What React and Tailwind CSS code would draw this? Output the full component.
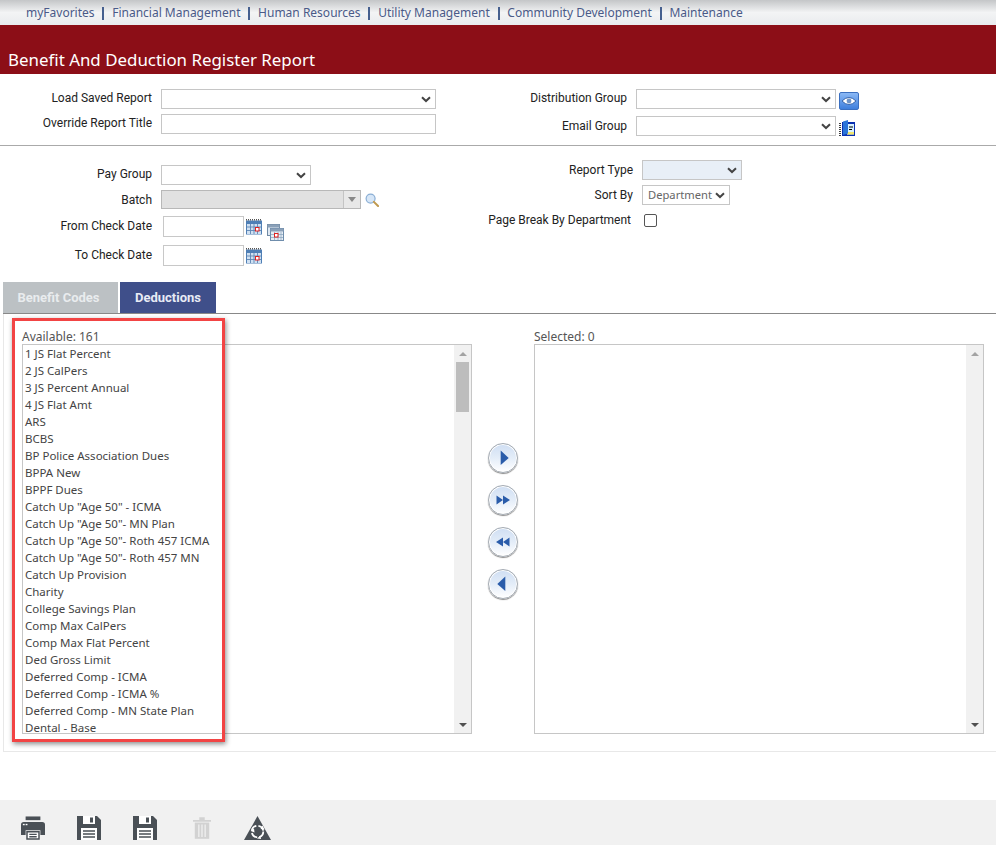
import React from "react";

const navItems = ["myFavorites", "Financial Management", "Human Resources", "Utility Management", "Community Development", "Maintenance"];

const available = [
  "1 JS Flat Percent", "2 JS CalPers", "3 JS Percent Annual", "4 JS Flat Amt", "ARS", "BCBS",
  "BP Police Association Dues", "BPPA New", "BPPF Dues", 'Catch Up "Age 50" - ICMA', 'Catch Up "Age 50"- MN Plan',
  'Catch Up "Age 50"- Roth 457 ICMA', 'Catch Up "Age 50"- Roth 457 MN', "Catch Up Provision", "Charity",
  "College Savings Plan", "Comp Max CalPers", "Comp Max Flat Percent", "Ded Gross Limit", "Deferred Comp - ICMA",
  "Deferred Comp - ICMA %", "Deferred Comp - MN State Plan", "Dental - Base",
];

const Chevron = () => (
  <svg width="10" height="7" viewBox="0 0 10 7" className="shrink-0">
    <path d="M1 1.2 L5 5 L9 1.2" fill="none" stroke="#444" strokeWidth="2" />
  </svg>
);

const Select = ({ className = "", children }) => (
  <div className={`flex items-center justify-between border border-[#c6c6c6] pl-[5px] pr-[4px] ${className}`}>
    <span className="text-[11.2px] text-[#666] font-['Noto_Sans',sans-serif]">{children}</span>
    <Chevron />
  </div>
);

const Label = ({ className = "", children }) => (
  <div className={`text-right text-[12px] leading-[14px] text-[#222] ${className}`}>{children}</div>
);

const Calendar = ({ className = "" }) => (
  <svg width="16" height="16" viewBox="0 0 16 16" className={className}>
    <rect x="0" y="1.5" width="16" height="14" fill="#4f7fb5" />
    <path d="M0 0.8H16" stroke="#555" strokeWidth="1.5" strokeDasharray="1 1" />
    <rect x="1" y="5" width="14" height="10" fill="#cfe0f2" />
    <path d="M1 8H15M1 11.5H15M4.5 5V15M8 5V15M11.5 5V15" stroke="#5d86b3" strokeWidth="0.9" />
    <rect x="9.5" y="8.5" width="3.5" height="3.5" fill="#fff" stroke="#e02020" />
  </svg>
);

const CalendarRange = () => (
  <svg width="17" height="17" viewBox="0 0 17 17">
    <rect x="0.5" y="0.5" width="12" height="11" fill="#dfe8f2" stroke="#708aa5" />
    <rect x="0.5" y="0.5" width="12" height="3" fill="#8aa0b8" />
    <rect x="3.5" y="4.5" width="13" height="12" fill="#e6edf5" stroke="#6f8dac" />
    <rect x="3.5" y="4.5" width="13" height="3" fill="#8aa0b8" />
    <path d="M4 10.5H16M4 13.5H16M7.5 8V16M11 8V16M14 8V16" stroke="#8fa8c0" strokeWidth="0.8" />
    <rect x="7.5" y="9.5" width="3.5" height="3.5" fill="#fff" stroke="#e02020" />
  </svg>
);

const MoveButton = ({ d }) => (
  <button className="flex h-[30px] w-[30px] items-center justify-center rounded-full border border-[#a4abb3] bg-gradient-to-b from-[#cfdef3] via-[#e4edf8] to-[#ffffff] shadow-[0_1px_1px_#8a8a8a,inset_0_0_0_1px_#ffffff]">
    <svg width="16" height="16" viewBox="0 0 16 16">
      <path d={d} fill="#2a5caa" />
    </svg>
  </button>
);

const Scrollbar = () => (
  <div className="flex w-[17px] shrink-0 flex-col justify-between bg-[#f1f1f1]">
    <div className="flex h-[17px] items-center justify-center">
      <div className="h-0 w-0 border-x-[4px] border-b-[4px] border-x-transparent border-b-[#a3a3a3]" />
    </div>
    <div className="flex h-[17px] items-center justify-center">
      <div className="h-0 w-0 border-x-[4px] border-t-[4px] border-x-transparent border-t-[#505050]" />
    </div>
  </div>
);

export default function App() {
  return (
    <div className="relative h-[845px] w-[996px] overflow-hidden bg-white font-['Roboto',sans-serif]">
      {/* top nav */}
      <div className="flex h-[25px] items-center bg-gradient-to-b from-[#c4c6c8] via-[#f3f4f5] to-[#e9ebee] pl-[26px] pt-[1px] font-['Noto_Sans',sans-serif] text-[12px] text-[#4a5a88]">
        {navItems.map((item, i) => (
          <React.Fragment key={item}>
            {i > 0 && <span className="mx-[7.8px] h-[13px] w-[2px] bg-[#46608f]" />}
            <span>{item}</span>
          </React.Fragment>
        ))}
      </div>

      {/* title */}
      <div className="flex h-[49px] items-end bg-[#8c0e17] pb-[2px] pl-[8px] font-['Noto_Sans',sans-serif] text-[16.9px] leading-[24px] text-white">
        Benefit And Deduction Register Report
      </div>

      {/* report options */}
      <div className="flex h-[72px] border-b border-[#aaaaaa] pt-[15px]">
        <div className="flex w-[488px] flex-col gap-[5px]">
          <div className="flex items-start gap-[9px]">
            <Label className="w-[152px] pt-[2px]">Load Saved Report</Label>
            <Select className="h-[20px] w-[275px]" />
          </div>
          <div className="flex items-start gap-[9px]">
            <Label className="w-[152px] pt-[2px]">Override Report Title</Label>
            <div className="h-[20px] w-[275px] border border-[#c6c6c6]" />
          </div>
        </div>
        <div className="flex flex-col gap-[6px]">
          <div className="flex items-start gap-[9px]">
            <Label className="w-[139px] pt-[2px]">Distribution Group</Label>
            <Select className="h-[20px] w-[200px]" />
            <div className="ml-[-6px] mt-[3px] flex h-[18px] w-[20px] items-center justify-center rounded-[2px] border border-[#3b6fc0] bg-gradient-to-b from-[#8ab8f5] to-[#3f7fdc]">
              <svg width="16" height="10" viewBox="0 0 16 10">
                <path d="M1 5 Q8 -2 15 5 Q8 12 1 5Z" fill="#fff" stroke="#1f4f9a" strokeWidth="0.8" />
                <circle cx="8" cy="5" r="2.4" fill="#6d93c8" />
              </svg>
            </div>
          </div>
          <div className="flex items-start gap-[9px]">
            <Label className="w-[139px] pt-[3px]">Email Group</Label>
            <Select className="h-[20px] w-[200px]" />
            <svg width="16" height="16" viewBox="0 0 16 16" className="ml-[-6px] mt-[4px]">
              <rect x="3" y="2" width="13" height="14" fill="#0a2fb0" />
              <rect x="8" y="4" width="7" height="10.5" fill="#d8f2ff" />
              <rect x="8" y="12" width="7" height="2.5" fill="#f2e66a" />
              <path d="M4 1.5 L9 0 V13.5 L4 15Z" fill="#2a74d8" />
              <path d="M1 3V16" stroke="#000" strokeWidth="1.5" strokeDasharray="1 1" />
              <path d="M10 7H14M10 9.5H13" stroke="#000" strokeWidth="1" />
            </svg>
          </div>
        </div>
      </div>

      {/* filters */}
      <div className="flex h-[136px]">
        <div className="flex w-[488px] flex-col pt-[19px]">
          <div className="flex items-start gap-[9px]">
            <Label className="w-[152px] pt-[2px]">Pay Group</Label>
            <Select className="h-[20px] w-[150px]" />
          </div>
          <div className="mt-[5px] flex items-center gap-[9px]">
            <Label className="w-[152px]">Batch</Label>
            <div className="flex h-[19px] w-[200px] border border-[#b8b8b8] bg-[#e1e1e1]">
              <div className="flex-1" />
              <div className="flex w-[17px] items-center justify-center border-l border-[#c4c4c4] bg-[#e8e8e8]">
                <div className="h-0 w-0 border-x-[4px] border-t-[5px] border-x-transparent border-t-[#888]" />
              </div>
            </div>
            <svg width="14" height="14" viewBox="0 0 15 15" className="ml-[-5px]">
              <circle cx="6" cy="6" r="4.8" fill="#d6e6f7" stroke="#8aaed4" strokeWidth="1.3" />
              <path d="M9.5 9.5 L14 14" stroke="#c09a50" strokeWidth="2.2" strokeLinecap="round" />
            </svg>
          </div>
          <div className="mt-[7px] flex items-start">
            <Label className="w-[152px] pt-[3px]">From Check Date</Label>
            <div className="ml-[11px] h-[21px] w-[81px] border border-[#c8c8c8]" />
            <Calendar className="ml-[2px] mt-[3px]" />
            <div className="ml-[5px] mt-[8px]"><CalendarRange /></div>
          </div>
          <div className="mt-[4px] flex items-start">
            <Label className="w-[152px] pt-[3px]">To Check Date</Label>
            <div className="ml-[11px] h-[21px] w-[81px] border border-[#c8c8c8]" />
            <Calendar className="ml-[2px] mt-[3px]" />
          </div>
        </div>
        <div className="flex flex-col pt-[14px]">
          <div className="flex items-center gap-[9px]">
            <Label className="w-[145px]">Report Type</Label>
            <Select className="h-[20px] w-[100px] bg-[#e8eff7]" />
          </div>
          <div className="mt-[5px] flex items-center gap-[9px]">
            <Label className="w-[145px]">Sort By</Label>
            <Select className="h-[20px] w-[88px]">Department</Select>
          </div>
          <div className="mt-[8px] flex items-center">
            <Label className="w-[143px]">Page Break By Department</Label>
            <div className="ml-[13px] h-[13px] w-[13px] rounded-[2px] border border-[#555]" />
          </div>
        </div>
      </div>

      {/* tabs */}
      <div className="ml-[3px] flex h-[32px] gap-[2px] border-b border-[#888] text-[13px] font-bold">
        <div className="flex h-[31px] w-[115px] items-center justify-center bg-[#bcc1c4] pr-[4px] pt-[1px] text-[#e9ecee]">Benefit Codes</div>
        <div className="flex h-[31px] w-[96px] items-center justify-center bg-[#3f4f8a] pt-[1px] text-[#e8ebf5]">Deductions</div>
      </div>

      {/* dual list */}
      <div className="ml-[3px] flex h-[438px] items-start border-b border-l border-[#e8e8e8] pl-[18px] pt-[16px] font-['Noto_Sans',sans-serif] text-[12px] text-[#555]">
        <div className="w-[450px]">
          <div className="h-[14px] leading-[14px]">Available: 161</div>
          <div className="flex h-[390px] border border-[#c6c6c6]">
            <div className="flex-1 pl-[2px] text-[11.5px] leading-[17px] text-[#444]">
              {available.map((item) => (
                <div key={item} className="h-[17px] whitespace-nowrap">{item}</div>
              ))}
            </div>
            <div className="relative flex">
              <Scrollbar />
              <div className="absolute left-[2px] top-[17px] h-[50px] w-[13px] bg-[#bdbdbd]" />
            </div>
          </div>
        </div>
        <div className="ml-[16px] mt-[113px] flex w-[30px] flex-col gap-[12px]">
          <MoveButton d="M5.7 0.5 L13.7 8 L5.7 15Z" />
          <MoveButton d="M1.5 3.5 L8 8 V3.5 L15 8 L8 12.5 V8 L1.5 12.5Z" />
          <MoveButton d="M14.5 3.5 L8 8 V3.5 L1 8 L8 12.5 V8 L14.5 12.5Z" />
          <MoveButton d="M10.3 0.5 L2.3 8 L10.3 15Z" />
        </div>
        <div className="ml-[16px] w-[450px]">
          <div className="h-[14px] leading-[14px]">Selected: 0</div>
          <div className="flex h-[390px] justify-end border border-[#c6c6c6]">
            <Scrollbar />
          </div>
        </div>
      </div>

      {/* toolbar */}
      <div className="mt-[48px] flex h-[45px] items-start bg-[#f1f1f1] pl-[21px] pt-[16px]">
        <svg width="24" height="24" viewBox="0 0 26 25">
          <rect x="5" y="0" width="16" height="4" fill="#4a5056" />
          <path d="M0 9 Q0 6 3 6 H23 Q26 6 26 9 V20 H21 V15 H5 V20 H0Z" fill="#4a5056" />
          <rect x="2" y="8" width="2" height="1.5" fill="#fff" />
          <rect x="5" y="8" width="2" height="1.5" fill="#fff" />
          <path d="M6.5 16.5 H19.5 V24.5 H6.5Z" fill="#fff" stroke="#4a5056" strokeWidth="1.6" />
          <path d="M9 19.5H17M9 22H17" stroke="#4a5056" strokeWidth="1.4" />
        </svg>
        <svg width="24" height="24" viewBox="0 0 24 24" className="ml-[32px]">
          <path d="M0 0 H20 L24 4 V24 H0Z" fill="#4a5056" />
          <rect x="6" y="0" width="12" height="8" fill="#fff" />
          <rect x="13" y="1.5" width="3" height="5" fill="#4a5056" />
          <rect x="4" y="12" width="16" height="12" fill="#fff" />
          <path d="M6 15H18M6 18H18M6 21H18" stroke="#4a5056" strokeWidth="1.4" />
        </svg>
        <svg width="24" height="24" viewBox="0 0 24 24" className="ml-[32px]">
          <path d="M0 0 H20 L24 4 V24 H0Z" fill="#4a5056" />
          <rect x="6" y="0" width="12" height="8" fill="#fff" />
          <rect x="13" y="1.5" width="3" height="5" fill="#4a5056" />
          <rect x="4" y="12" width="16" height="12" fill="#fff" />
          <path d="M6 15H18M6 18H18M6 21H18" stroke="#4a5056" strokeWidth="1.4" />
        </svg>
        <svg width="18" height="24" viewBox="0 0 20 24" className="ml-[36px]">
          <path d="M0 3H20V5H0ZM7 0H13V3H7Z" fill="#d2d2d2" />
          <path d="M2 6H18V24H2Z" fill="#d2d2d2" />
          <path d="M6.5 8V22M10 8V22M13.5 8V22" stroke="#f1f1f1" strokeWidth="1.4" />
        </svg>
        <svg width="27" height="24" viewBox="0 0 27 24" className="ml-[33px]">
          <path d="M13.5 0 L27 24 H0Z" fill="#4a5056" />
          <circle cx="13.5" cy="15.5" r="5.8" fill="none" stroke="#fff" strokeWidth="1.8" strokeDasharray="7 2.2" />
          <path d="M18.5 9.5 L20.5 13.5 L16.5 13Z M6.8 15 L10 12.5 L10.5 16.5Z M13 22.5 L16.5 19.5 L17 23Z" fill="#fff" />
        </svg>
      </div>

      {/* red highlight */}
      <div className="absolute left-[12px] top-[318px] h-[424px] w-[213px] border-[3px] border-[#f24444] shadow-[1px_2px_5px_rgba(0,0,0,0.45)]" />
    </div>
  );
}
